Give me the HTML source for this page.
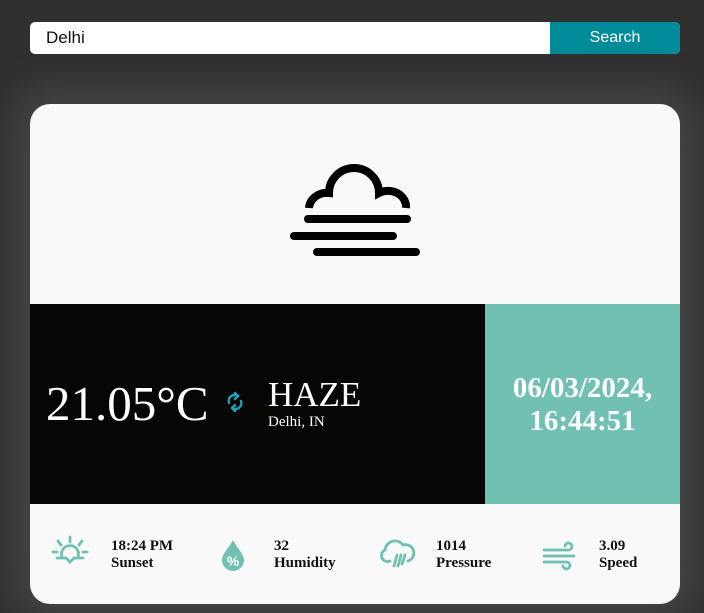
<!DOCTYPE html>
<html><head><meta charset="utf-8"><style>
html,body{margin:0;padding:0;height:613px;overflow:hidden;}
body{width:704px;height:613px;background:#303030;position:relative;overflow:hidden;font-family:"Liberation Serif",serif;}
.search{position:absolute;left:30px;top:22px;width:650px;height:32px;border-radius:5px;overflow:hidden;background:#fff;}
.search .inp{position:absolute;left:16px;top:0;line-height:32px;font-family:"Liberation Sans",sans-serif;font-size:17px;color:#111;}
.search .btn{position:absolute;right:0;top:0;width:130px;height:32px;background:#028b9b;color:#fff;font-family:"Liberation Sans",sans-serif;font-size:16px;line-height:32px;text-align:center;}
.card{position:absolute;left:30px;top:104px;width:650px;height:500px;border-radius:20px;overflow:hidden;background:#f9f9f9;box-shadow:0 0 40px 14px rgba(100,100,100,.45);}
.mid{position:absolute;left:0;top:200px;width:455px;height:200px;background:#070605;}
.teal{position:absolute;left:455px;top:200px;width:195px;height:200px;background:#71c1b3;color:#fff;font-weight:bold;font-size:29px;text-align:center;line-height:33px;}
.abs{position:absolute;white-space:nowrap;}
.st{font-weight:bold;font-size:15px;line-height:17px;color:#111;}
</style></head><body>
<div class="search"><div class="inp">Delhi</div><div class="btn">Search</div></div>
<div class="card">
<svg class="abs" style="left:0;top:0" width="650" height="200">
<g fill="none" stroke="#000" stroke-width="8" stroke-linecap="round">
<path d="M279 104 A18 16 0 0 1 299 89 A25 25 0 0 1 349 89 A18 16 0 0 1 376 104" stroke-linecap="butt"/>
<line x1="278" y1="115" x2="377" y2="115"/>
<line x1="264" y1="132" x2="363" y2="132"/>
<line x1="287" y1="148" x2="386" y2="148"/>
</g></svg>
<div class="mid">
<div class="abs" style="left:16px;top:72px;font-size:49px;color:#fff;line-height:56px">21.05°C</div>
<svg class="abs" style="left:195px;top:86px" width="20" height="24" viewBox="0 0 20 24"><g fill="none" stroke="#1aa3b8" stroke-width="2.4" stroke-linecap="round"><path d="M4 13 A6 6 0 0 1 13 6"/><path d="M10 3 L13 6 L10 9"/><path d="M16 11 A6 6 0 0 1 7 18"/><path d="M10 21 L7 18 L10 15"/></g></svg>
<div class="abs" style="left:238px;top:71px;font-size:35px;color:#fff;line-height:40px">HAZE</div>
<div class="abs" style="left:238px;top:110px;font-size:15px;color:#fff">Delhi, IN</div>
</div>
<div class="teal"><div style="padding-top:68px">06/03/2024,<br>16:44:51</div></div>
<svg class="abs" style="left:0;top:400px" width="650" height="100">
<g fill="none" stroke="#71c1b3" stroke-width="2.8" stroke-linecap="round">
<path d="M32 53 A8.5 8.5 0 1 1 48 53"/><path d="M27 54 L36 54 L40 58 L44 54 L53 54"/>
<line x1="40" y1="33" x2="40" y2="38"/><line x1="28" y1="37" x2="31" y2="41"/><line x1="52" y1="37" x2="49" y2="41"/><line x1="23" y1="48" x2="27" y2="48"/><line x1="53" y1="48" x2="57" y2="48"/>
<path d="M360 57 A6 6 0 0 1 355 46 A10 10 0 0 1 373 41 A7.5 7.5 0 0 1 378 57"/>
<line x1="367" y1="51" x2="364" y2="62"/><line x1="371" y1="51" x2="368" y2="62"/><line x1="375" y1="51" x2="372" y2="60"/>
<path d="M514 46 L538 46 A3.5 3.5 0 1 0 535 42"/><path d="M514 52 L544 52"/><path d="M514 58 L536 58 A3.5 3.5 0 1 1 533 62"/>
</g>
<path d="M203 36 C199 44 192 50 192 56 A11 11 0 0 0 214 56 C214 50 207 44 203 36Z" fill="#71c1b3"/>
<text x="203" y="62" text-anchor="middle" font-family="Liberation Sans" font-weight="bold" font-size="14" fill="#fff">%</text>
</svg>
<div class="abs st" style="left:81px;top:434px">18:24 PM<br>Sunset</div>
<div class="abs st" style="left:244px;top:434px">32<br>Humidity</div>
<div class="abs st" style="left:406px;top:434px">1014<br>Pressure</div>
<div class="abs st" style="left:569px;top:434px">3.09<br>Speed</div>
</div>
</body></html>
